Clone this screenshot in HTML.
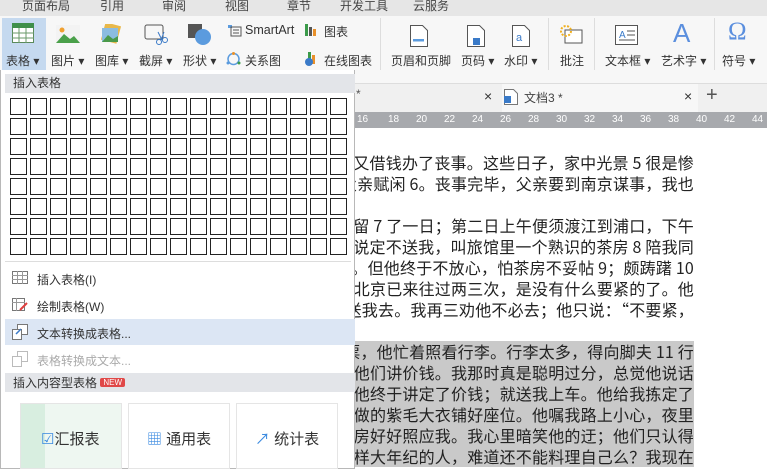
<!DOCTYPE html>
<html><head><meta charset="utf-8"><style>
*{margin:0;padding:0;box-sizing:border-box}
body{width:767px;height:469px;overflow:hidden;position:relative;background:#fff;font-family:"Liberation Sans","Noto Sans CJK SC",sans-serif;font-size:12px;color:#333}
.a{position:absolute}
.tabs{left:0;top:0;width:767px;height:16px;background:#e6e6e6;font-size:12px;color:#444}
.tabs span{position:absolute;top:-3px}
.rib{left:0;top:16px;width:767px;height:68px;background:#f7f7f7;border-bottom:1px solid #ddd}
.lbl{position:absolute;top:52px;font-size:12px;color:#333;white-space:nowrap}
.ic{position:absolute}
.doctabs{left:354px;top:84px;width:413px;height:28px;background:#f0f0f0}
.ruler{left:354px;top:112px;width:413px;height:16px;background:#a7a9ad}
.ruler i{position:absolute;top:2px;font-style:normal;font-size:10px;color:#fff}
.page{left:354px;top:128px;width:413px;height:341px;background:#fff}
.ln{position:absolute;left:354px;width:340px;height:21px;overflow:hidden;display:flex;justify-content:flex-end;font-family:"Noto Sans CJK SC",sans-serif;font-size:16px;letter-spacing:0.2px;line-height:21px;color:#222;white-space:nowrap}
.hl{background:#c9c9c9}
.menu{left:0;top:70px;width:355px;height:399px;background:#fff;border:1px solid #b8b8b8;border-top:none}
.hd{position:absolute;left:4px;width:350px;height:19px;background:#e3e5e9;font-size:12px;color:#333;padding-left:8px;line-height:19px}
.box{position:absolute;width:17px;height:17px;border:1px solid #222;background:#fff}
.mi{position:absolute;left:36px;font-size:12px}
.card{position:absolute;top:403px;width:102px;height:66px;border:1px solid #e5e5e5;background:#fff;font-size:15px;color:#333}
</style></head><body>
<div class="a tabs">
<span style="left:22px">页面布局</span><span style="left:100px">引用</span><span style="left:162px">审阅</span><span style="left:225px">视图</span><span style="left:287px">章节</span><span style="left:340px">开发工具</span><span style="left:413px">云服务</span>
</div>
<div class="a rib">
<div class="a" style="left:2px;top:2px;width:44px;height:52px;background:#c5d9ef"></div>
<svg class="ic" style="left:12px;top:7px" width="22" height="20"><rect x="0.5" y="0.5" width="21" height="19" fill="#fff" stroke="#5a8a5a"/><rect x="0" y="0" width="22" height="5" fill="#3f8f4a"/><path d="M7 5v15M14 5v15M0 10h22M0 15h22" stroke="#6a9a6a"/></svg>
<div class="lbl" style="left:6px;top:36px">表格 ▾</div>
<svg class="ic" style="left:56px;top:9px" width="24" height="18"><rect width="24" height="18" fill="#f3f3f3"/><circle cx="6" cy="5" r="2.5" fill="#f0a030"/><path d="M0 18l8-9 6 5 4-3 6 7z" fill="#4aa04a"/></svg>
<div class="lbl" style="left:51px;top:36px">图片 ▾</div>
<svg class="ic" style="left:100px;top:8px" width="22" height="20"><rect x="3" y="0" width="16" height="18" fill="#e8b84a" transform="rotate(15 11 9)"/><rect x="2" y="4" width="16" height="14" fill="#8bbce0"/><path d="M2 18l6-7 5 4 5-3v6z" fill="#4a9a4a"/></svg>
<div class="lbl" style="left:95px;top:36px">图库 ▾</div>
<svg class="ic" style="left:144px;top:8px" width="24" height="22"><rect x="1" y="1" width="18" height="14" rx="2" fill="none" stroke="#555"/><circle cx="15" cy="18" r="2.5" fill="none" stroke="#3a7ac8"/><circle cx="21" cy="16" r="2.5" fill="none" stroke="#3a7ac8"/><path d="M14 8l4 8M20 8l-3 8" stroke="#3a7ac8"/></svg>
<div class="lbl" style="left:139px;top:36px">截屏 ▾</div>
<svg class="ic" style="left:188px;top:8px" width="24" height="22"><rect x="0" y="0" width="14" height="14" fill="#555"/><circle cx="15" cy="13" r="8" fill="#5b9bde"/></svg>
<div class="lbl" style="left:183px;top:36px">形状 ▾</div>
<svg class="ic" style="left:226px;top:7px" width="16" height="14"><path d="M2 2h4v3H2z" fill="#5b9bde"/><rect x="5" y="4" width="10" height="9" fill="none" stroke="#555"/><path d="M7 7h6M7 10h6" stroke="#555"/></svg>
<div class="lbl" style="left:245px;top:7px;font-size:12.5px">SmartArt</div>
<svg class="ic" style="left:305px;top:8px" width="14" height="12"><rect x="0" y="0" width="3" height="12" fill="#3b9a4a"/><rect x="4" y="3" width="3" height="9" fill="#555"/><rect x="8" y="5" width="3" height="7" fill="#e8902a"/></svg>
<div class="lbl" style="left:324px;top:7px">图表</div>
<svg class="ic" style="left:226px;top:36px" width="15" height="14"><circle cx="7.5" cy="7" r="5.5" fill="none" stroke="#5b9bde" stroke-width="1.5"/><circle cx="7.5" cy="1.5" r="1.5" fill="#e8902a"/><circle cx="2" cy="11" r="1.5" fill="#5b9bde"/><circle cx="13" cy="11" r="1.5" fill="#3b9a4a"/></svg>
<div class="lbl" style="left:245px;top:36px">关系图</div>
<svg class="ic" style="left:305px;top:36px" width="14" height="14"><rect x="3" y="0" width="3" height="12" fill="#3b9a4a"/><rect x="7" y="3" width="3" height="9" fill="#e8902a"/><circle cx="4" cy="10" r="4" fill="#3a7ac8"/></svg>
<div class="lbl" style="left:324px;top:36px">在线图表</div>
<div class="a" style="left:380px;top:2px;width:1px;height:52px;background:#ddd"></div>
<svg class="ic" style="left:410px;top:9px" width="18" height="22"><path d="M0.5 0.5h12l5 5v16H0.5z" fill="#fff" stroke="#555"/><rect x="3" y="14" width="11" height="2.5" fill="#5b9bde"/></svg>
<div class="lbl" style="left:391px;top:36px">页眉和页脚</div>
<svg class="ic" style="left:467px;top:9px" width="18" height="22"><path d="M0.5 0.5h12l5 5v16H0.5z" fill="#fff" stroke="#555"/><rect x="6" y="13" width="7" height="7" fill="#3a7ac8"/></svg>
<div class="lbl" style="left:461px;top:36px">页码 ▾</div>
<svg class="ic" style="left:512px;top:9px" width="18" height="22"><path d="M0.5 0.5h12l5 5v16H0.5z" fill="#fff" stroke="#555"/><text x="4" y="16" font-size="11" fill="#3a7ac8" font-family="Liberation Sans">a</text></svg>
<div class="lbl" style="left:504px;top:36px">水印 ▾</div>
<div class="a" style="left:548px;top:2px;width:1px;height:52px;background:#ddd"></div>
<svg class="ic" style="left:560px;top:9px" width="24" height="20"><path d="M5 5h17v13H5z" fill="#fff" stroke="#555"/><circle cx="6" cy="6" r="5" fill="none" stroke="#f0b020" stroke-dasharray="2 1.5" stroke-width="2"/></svg>
<div class="lbl" style="left:560px;top:36px">批注</div>
<div class="a" style="left:594px;top:2px;width:1px;height:52px;background:#ddd"></div>
<svg class="ic" style="left:615px;top:9px" width="24" height="20"><rect x="0.5" y="0.5" width="22" height="19" fill="#fff" stroke="#555"/><text x="4" y="13" font-size="10" fill="#3a7ac8" font-family="Liberation Sans">A</text><path d="M12 6h8M12 10h8M4 15h16" stroke="#555"/></svg>
<div class="lbl" style="left:605px;top:36px">文本框 ▾</div>
<div class="lbl" style="left:673px;top:2px;font-size:26px;color:#5b8fde;font-family:'Liberation Sans'">A</div>
<div class="lbl" style="left:661px;top:36px">艺术字 ▾</div>
<div class="a" style="left:714px;top:2px;width:1px;height:52px;background:#ddd"></div>
<div class="lbl" style="left:728px;top:2px;font-size:25px;color:#5b8fde;font-family:'Liberation Serif'">Ω</div>
<div class="lbl" style="left:722px;top:36px">符号 ▾</div>
</div>
<div class="a doctabs">
<div class="a" style="left:148px;top:0;width:196px;height:28px;background:#f7f7f7"></div>
<div class="a" style="left:130px;top:4px;font-size:14px;color:#333">×</div>
<svg class="a" style="left:504px;top:89px;position:fixed" width="14" height="16"><path d="M0.5 0.5h9l4 4v11H0.5z" fill="#fff" stroke="#777"/><rect x="0" y="7" width="7" height="7" fill="#3a7ac8"/></svg>
<div class="a" style="left:170px;top:5px;font-size:12px;color:#444">文档3 *</div>
<div class="a" style="left:330px;top:4px;font-size:14px;color:#333">×</div>
<div class="a" style="left:352px;top:0px;font-size:20px;color:#555">+</div>
<div class="a" style="left:2px;top:3px;font-size:12px;color:#555">*</div>
</div>
<div class="a ruler">
<i style="left:3px">16</i><i style="left:34px">18</i><i style="left:62px">20</i><i style="left:90px">22</i><i style="left:118px">24</i><i style="left:146px">26</i><i style="left:174px">28</i><i style="left:202px">30</i><i style="left:230px">32</i><i style="left:258px">34</i><i style="left:286px">36</i><i style="left:314px">38</i><i style="left:342px">40</i><i style="left:370px">42</i><i style="left:398px">44</i>
<div class="a" style="left:340px;top:0;width:73px;height:16px;background:#c9cacd;z-index:-1"></div>
</div>
<div class="a page"></div>
<div class="ln" style="top:152px">又借钱办了丧事。这些日子，家中光景 5 很是惨</div>
<div class="ln" style="top:173px">父亲赋闲 6。丧事完毕，父亲要到南京谋事，我也</div>
<div class="ln" style="top:215px">勾留 7 了一日；第二日上午便须渡江到浦口，下午</div>
<div class="ln" style="top:236px">已说定不送我，叫旅馆里一个熟识的茶房 8 陪我同</div>
<div class="ln" style="top:257px">细。但他终于不放心，怕茶房不妥帖 9；颇踌躇 10</div>
<div class="ln" style="top:278px">。北京已来往过两三次，是没有什么要紧的了。他</div>
<div class="ln" style="top:299px">己送我去。我再三劝他不必去；他只说：“不要紧，</div>
<div class="ln hl" style="top:341px">票，他忙着照看行李。行李太多，得向脚夫 11 行</div>
<div class="ln hl" style="top:362px">和他们讲价钱。我那时真是聪明过分，总觉他说话</div>
<div class="ln hl" style="top:383px">但他终于讲定了价钱；就送我上车。他给我拣定了</div>
<div class="ln hl" style="top:404px">我做的紫毛大衣铺好座位。他嘱我路上小心，夜里</div>
<div class="ln hl" style="top:425px">茶房好好照应我。我心里暗笑他的迂；他们只认得</div>
<div class="ln hl" style="top:446px">这样大年纪的人，难道还不能料理自己么？我现在</div>
<div class="a menu">
<div class="hd" style="top:4px">插入表格</div>
<div id="g"></div>
<div class="a" style="left:4px;top:191px;width:346px;height:1px;background:#ddd"></div>
<svg class="a" style="left:11px;top:201px" width="16" height="13"><rect x="0.5" y="0.5" width="15" height="12" fill="#fff" stroke="#777"/><path d="M5.5 0v13M10.5 0v13M0 4.5h16M0 8.5h16" stroke="#999"/></svg>
<div class="mi" style="top:201px">插入表格(I)</div>
<svg class="a" style="left:11px;top:228px" width="16" height="13"><rect x="0.5" y="0.5" width="12" height="12" fill="#fff" stroke="#777"/><path d="M4.5 0v13M0 4.5h13" stroke="#999"/><path d="M8 12l7-7" stroke="#e04040" stroke-width="2"/></svg>
<div class="mi" style="top:228px">绘制表格(W)</div>
<div class="a" style="left:4px;top:249px;width:350px;height:26px;background:#dce6f4"></div>
<svg class="a" style="left:11px;top:254px" width="16" height="16"><rect x="5.5" y="0.5" width="10" height="10" fill="#fff" stroke="#777"/><rect x="0.5" y="5.5" width="9" height="10" fill="#fff" stroke="#777"/><path d="M4 10l5-5" stroke="#3a7ac8" stroke-width="1.5"/></svg>
<div class="mi" style="top:255px">文本转换成表格...</div>
<svg class="a" style="left:11px;top:281px" width="16" height="16"><rect x="5.5" y="0.5" width="10" height="10" fill="#fff" stroke="#bbb"/><rect x="0.5" y="5.5" width="9" height="10" fill="#fff" stroke="#bbb"/></svg>
<div class="mi" style="top:282px;color:#aaa">表格转换成文本...</div>
<div class="hd" style="top:303px">插入内容型表格 <span style="background:#e04848;color:#fff;font-size:8px;padding:0 3px;border-radius:2px;vertical-align:2px">NEW</span></div>
</div>
<div class="card" style="left:20px;background:linear-gradient(90deg,#d8eee0 0,#d8eee0 24px,#eef7f1 24px)"><div class="a" style="left:20px;top:24px"><span style="color:#3a8ae0">☑</span>汇报表</div></div>
<div class="card" style="left:128px"><div class="a" style="left:18px;top:24px"><span style="color:#3a8ae0">▦</span> 通用表</div></div>
<div class="card" style="left:236px"><div class="a" style="left:18px;top:24px"><span style="color:#3a8ae0">↗</span> 统计表</div></div>
<script>
var g=document.getElementById('g'),h='';
for(var r=0;r<8;r++)for(var c=0;c<17;c++)h+='<div class="box" style="left:'+(9+c*20)+'px;top:'+(28+r*20)+'px"></div>';
g.innerHTML=h;
</script>
</body></html>
